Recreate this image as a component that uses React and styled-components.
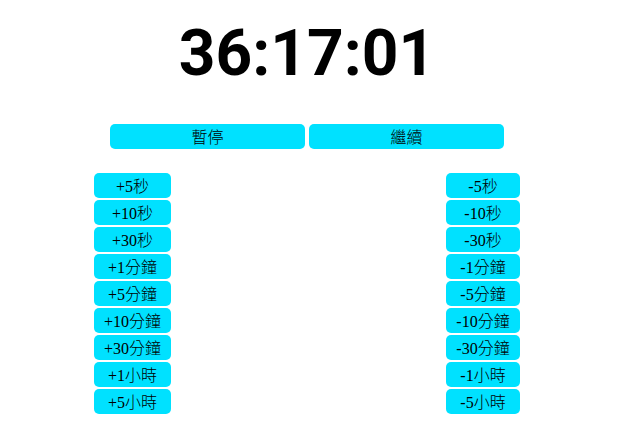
import React from "react";
import styled, { createGlobalStyle } from "styled-components";

const GlobalStyle = createGlobalStyle`
  body {
    margin: 0;
    background: #fff;
    color: #000;
  }
`;

const Page = styled.main`
  display: flex;
  flex-direction: column;
  align-items: center;
  padding: 16px 6px 16px 0;
`;

const Clock = styled.h1`
  margin: 0;
  font: 700 64px/75px Roboto, sans-serif;
`;

const Button = styled.button`
  min-width: 74px;
  padding: 2px 10px 0;
  border: 0;
  border-radius: 5px;
  background: #00e1ff;
  color: #000;
  font: 300 16px/23px "Liberation Serif", "Noto Sans CJK TC", serif;
  white-space: nowrap;
  cursor: pointer;
`;

const Controls = styled.div`
  display: grid;
  grid-template-columns: 195px 195px;
  gap: 4px;
  margin-top: 33px;
`;

const Adjustments = styled.div`
  display: flex;
  justify-content: space-between;
  width: 70%;
  max-width: 426px;
  margin-top: 24px;
`;

const Column = styled.div`
  display: grid;
  gap: 2px;
`;

const steps = ["5秒", "10秒", "30秒", "1分鐘", "5分鐘", "10分鐘", "30分鐘", "1小時", "5小時"];

export default function App() {
  return (
    <>
      <GlobalStyle />
      <Page>
        <Clock>36:17:01</Clock>
        <Controls>
          <Button type="button">暫停</Button>
          <Button type="button">繼續</Button>
        </Controls>
        <Adjustments>
          {["+", "-"].map((sign) => (
            <Column key={sign}>
              {steps.map((step) => (
                <Button type="button" key={step}>{sign + step}</Button>
              ))}
            </Column>
          ))}
        </Adjustments>
      </Page>
    </>
  );
}
